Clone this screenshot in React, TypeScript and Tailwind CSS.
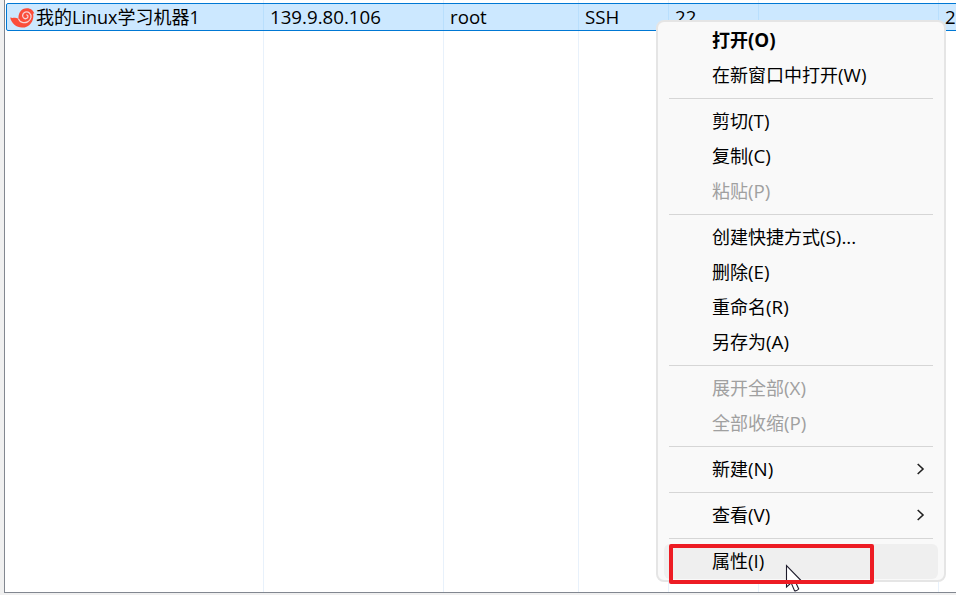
import React from "react";

type Entry = { han: string; key: string; bold?: boolean; disabled?: boolean; sub?: boolean; active?: boolean };

const groups: Entry[][] = [
  [
    { han: "打开", key: "(O)", bold: true },
    { han: "在新窗口中打开", key: "(W)" },
  ],
  [
    { han: "剪切", key: "(T)" },
    { han: "复制", key: "(C)" },
    { han: "粘贴", key: "(P)", disabled: true },
  ],
  [
    { han: "创建快捷方式", key: "(S)..." },
    { han: "删除", key: "(E)" },
    { han: "重命名", key: "(R)" },
    { han: "另存为", key: "(A)" },
  ],
  [
    { han: "展开全部", key: "(X)", disabled: true },
    { han: "全部收缩", key: "(P)", disabled: true },
  ],
  [{ han: "新建", key: "(N)", sub: true }],
  [{ han: "查看", key: "(V)", sub: true }],
  [{ han: "属性", key: "(I)", active: true }],
];

const columns = [
  { width: "w-[259px]", text: "" },
  { width: "w-[180px]", text: "139.9.80.106" },
  { width: "w-[135px]", text: "root" },
  { width: "w-[90px]", text: "SSH" },
  { width: "w-[90px]", text: "22" },
  { width: "w-[180px]", text: "" },
  { width: "w-[180px]", text: "2" },
];

function Shell() {
  return (
    <svg width="25" height="20" viewBox="0 0 25 20" className="mt-px shrink-0">
      <path
        d="M0.2 9.6C3 10.4 5.6 9 8.6 11.2C7.8 5 11.4 0.2 16.8 0.2C20.6 0.1 23.4 2.2 24.3 5.6L23.1 5.4C24.6 12.8 19.6 19.6 12 19.6C6.4 19.6 1.4 15.6 0.2 9.6Z"
        fill="#fb4d3a"
      />
      <path
        d="M8.5 11C10 14.4 14 15.6 17.6 13.8C21.4 11.9 22.2 7.2 19.4 4.9C16.8 2.9 12.9 4.2 12.6 7.4C12.4 10.2 15.4 11.6 17.2 10.1C18.6 8.8 18 6.8 16.3 6.9"
        fill="none"
        stroke="#f8d3d5"
        strokeWidth="1.3"
      />
    </svg>
  );
}

function MenuItem({ item }: { item: Entry }) {
  return (
    <div
      className={`flex h-[35px] items-center justify-between rounded-md pl-[48px] pr-[13px] ${item.active ? "bg-[#efefef]" : ""} ${item.disabled ? "text-[#a0a0a0]" : "text-black"} ${item.bold ? "font-bold" : ""}`}
    >
      <span className="pb-[2px]">
        {item.han}
        <span className="text-[18.8px]">{item.key}</span>
      </span>
      {item.sub && (
        <svg width="9" height="12" viewBox="0 0 9 12" fill="none" stroke="#222" strokeWidth="1.6" className="mb-[2px]">
          <path d="M1.7 1L7 6L1.7 11" />
        </svg>
      )}
    </div>
  );
}

export default function App() {
  return (
    <div className="relative h-[595px] w-[956px] overflow-hidden bg-[#f0f0f0] pl-[4px] font-['Open_Sans','Noto_Sans_CJK_SC',sans-serif] text-[18px] leading-[26px] text-black">
      <div className="relative h-[593px] overflow-hidden border-b border-l border-[#828790] bg-white">
        <div className="flex h-full w-[1114px]">
          {columns.map((c, i) => (
            <div key={i} className={`${c.width} shrink-0 border-r border-[#e8f1fb]`} />
          ))}
        </div>
        <div className="absolute left-px top-[3px] flex h-[28px] w-[1100px] rounded-[2px] border border-[#0078d4] bg-[#cce8ff]">
          <div className="flex w-[257px] shrink-0 items-center border-r border-[#b9dffd] pl-[3px]">
            <Shell />
            <span className="ml-px whitespace-nowrap">我的Linux学习机器1</span>
          </div>
          {columns.slice(1).map((c, i) => (
            <div key={i} className={`${c.width} flex shrink-0 items-center border-r border-[#b9dffd] pl-[6px] text-[18.7px]`}>
              {c.text}
            </div>
          ))}
        </div>
      </div>

      <div className="absolute left-[656px] top-[20px] h-[562px] w-[290px] rounded-lg border-2 border-[#e5e5e5] bg-[#f9f9f9] px-[6px] pt-px">
        {groups.map((g, i) => (
          <div key={i}>
            {i > 0 && (
              <div className="flex h-[11px] items-center px-[5px]">
                <div className="h-px w-full bg-[#d6d6d6]" />
              </div>
            )}
            {g.map((item) => (
              <MenuItem key={item.han} item={item} />
            ))}
          </div>
        ))}
      </div>

      <div className="absolute left-[669px] top-[544px] h-[40px] w-[205px] rounded-[2px] border-4 border-[#ed1c24]" />
      <svg className="absolute left-[785px] top-[564px]" width="20" height="30" viewBox="0 0 20 30">
        <path
          d="M1.5 1.5V23L6.2 18.8L9.5 26.7Q11.5 27.5 13.7 25L10.3 17.5H17Z"
          fill="#fff"
          stroke="#1d1b2b"
          strokeWidth="1.1"
        />
        <path d="M0 16H20V20H0Z" fill="#ed1c24" />
      </svg>
    </div>
  );
}
